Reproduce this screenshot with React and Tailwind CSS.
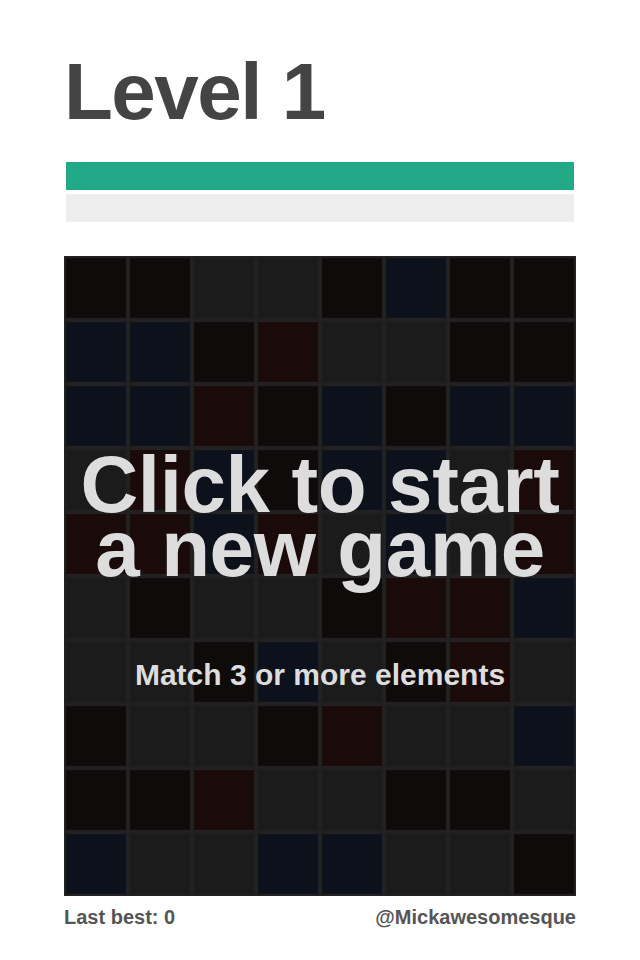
import React from 'react';

// k = black, b = blue, r = red, g = grey (empty)
const BOARD = [
  'kkggkbkk',
  'bbkrggkk',
  'bbrkbkbb',
  'grbkbbgr',
  'rrbrgbgr',
  'gkggkrrb',
  'ggkbgkrg',
  'kggkrggb',
  'kkrggkkg',
  'bggbbggk',
];

const CELL = {
  k: 'bg-[#0e0b0a]',
  b: 'bg-[#0d111c]',
  r: 'bg-[#1b0a0a]',
  g: 'bg-[#1b1b1b]',
};

function Cell({ kind }) {
  return <div className={`m-[2px] h-[60px] w-[60px] ${CELL[kind]}`} />;
}

export default function App() {
  return (
    <div className="min-h-[960px] bg-white font-['Liberation_Sans',Arial,sans-serif]">
      <div className="mx-auto w-[512px] pt-[52px]">
        <h1 className="text-[80px] font-bold leading-[80px] tracking-[-1.5px] text-[#444444]">Level 1</h1>

        <div className="mx-[2px] mt-[30px] h-[28px] bg-[#22aa88]" />
        <div className="mx-[2px] mt-[4px] h-[28px] bg-[#ededed]" />

        {/* Board */}
        <div className="relative mt-[34px] h-[640px] w-[512px] bg-[#212121]">
          <div className="grid grid-cols-8">
            {BOARD.map((row, y) =>
              row.split('').map((c, x) => <Cell key={`${y}-${x}`} kind={c} />)
            )}
          </div>

          {/* Start overlay */}
          <div className="absolute inset-0 flex cursor-pointer flex-col items-center pt-[197px] text-center font-bold text-[#dddddd]">
            <p className="text-[80px] leading-[64px] tracking-[-0.4px]">
              Click to start
              <br />
              a new game
            </p>
            <p className="mt-[71px] text-[30px]">Match 3 or more elements</p>
          </div>
        </div>

        <div className="mt-[6px] flex justify-between text-[20px] font-bold text-[#555555]">
          <span>Last best: 0</span>
          <span>@Mickawesomesque</span>
        </div>
      </div>
    </div>
  );
}
